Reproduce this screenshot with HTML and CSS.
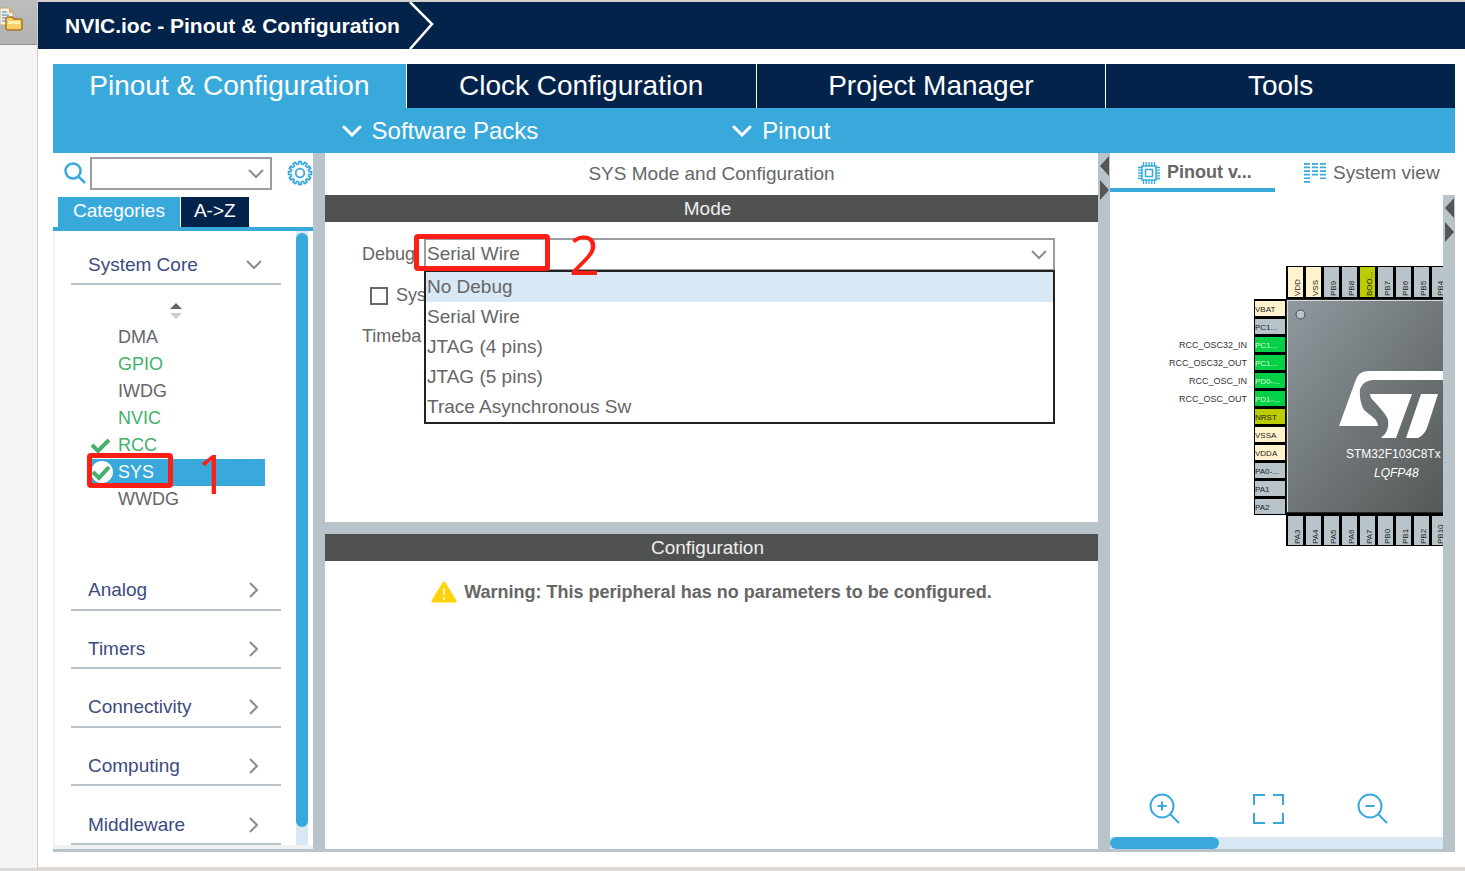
FILE: index.html
```html
<!DOCTYPE html>
<html lang="en">
<head>
  <meta charset="UTF-8" />
  <meta name="viewport" content="width=device-width, initial-scale=1.0"/>
  <title>NVIC.ioc - Pinout &amp; Configuration</title>
  <link rel="stylesheet" href="styles.css">
</head>
<body>

  <aside class="side-strip">
    <button class="restore-btn" aria-label="Open projects">
      <svg width="24" height="44" viewBox="0 0 24 44">
        <path d="M0 8h9l4 4v13H0z" fill="#f4f1e6" stroke="#c9ad72"/>
        <path d="M9 8v5h4z" fill="#d9b56a"/>
        <path d="M2 12h5M2 15h7M2 18h5M2 21h4" stroke="#7d9fd0" stroke-width="1.5"/>
        <path d="M6 19q0-2 2-2h4l2 2h6q2 0 2 2v7q0 2-2 2H8q-2 0-2-2z" fill="#f9cf63" stroke="#ad7427" stroke-width="1.5"/>
        <path d="M8 21h12v3H8z" fill="#fff0b0"/>
      </svg>
    </button>
  </aside>

  <main class="editor">
    <header class="title-bar">
      <h1>NVIC.ioc - Pinout &amp; Configuration</h1>
      <svg class="crumb-arrow" width="26" height="47" viewBox="0 0 26 47">
        <path d="M1 0L23 22L1 47" fill="none" stroke="#fff" stroke-width="2.5"/>
      </svg>
    </header>

    <div class="content">
      <nav class="main-tabs">
        <button class="main-tab active">Pinout &amp; Configuration</button>
        <button class="main-tab">Clock Configuration</button>
        <button class="main-tab">Project Manager</button>
        <button class="main-tab">Tools</button>
      </nav>
      <div class="sub-bar">
        <button class="sub-btn">
          <svg width="20" height="12" viewBox="0 0 20 12"><path d="M2 2l8 8 8-8" fill="none" stroke="#fff" stroke-width="3" stroke-linecap="round"/></svg>
          Software Packs
        </button>
        <button class="sub-btn">
          <svg width="20" height="12" viewBox="0 0 20 12"><path d="M2 2l8 8 8-8" fill="none" stroke="#fff" stroke-width="3" stroke-linecap="round"/></svg>
          Pinout
        </button>
      </div>

      <div class="workspace">
        <!-- Peripheral categories -->
        <section class="categories">
          <div class="search-row">
            <svg width="22" height="22" viewBox="0 0 22 22"><g fill="none" stroke="#39a9dc" stroke-width="2.5"><circle cx="9" cy="9" r="7.5"/><path d="M14.500 14.500L21 21"/></g></svg>
            <div class="select-box search-box">
              <select aria-label="Search peripheral"><option></option></select>
              <svg class="chevron" width="16" height="10" viewBox="0 0 16 10"><path d="M1 1l7 7 7-7" fill="none" stroke="#8c8c8c" stroke-width="2"/></svg>
            </div>
            <button class="gear-btn" aria-label="Settings">
              <svg width="26" height="26" viewBox="-13 -13 26 26">
                <defs><path id="tooth" d="M-2.300-8.700L-1.500-8.900L-1.300-11.400H1.300L1.500-8.900L2.300-8.700"/></defs>
                <g fill="none" stroke="#39a9dc" stroke-width="1.800">
                  <circle r="4.300"/>
                  <use href="#tooth"/>
                  <use href="#tooth" transform="rotate(30)"/>
                  <use href="#tooth" transform="rotate(60)"/>
                  <use href="#tooth" transform="rotate(90)"/>
                  <use href="#tooth" transform="rotate(120)"/>
                  <use href="#tooth" transform="rotate(150)"/>
                  <use href="#tooth" transform="rotate(180)"/>
                  <use href="#tooth" transform="rotate(210)"/>
                  <use href="#tooth" transform="rotate(240)"/>
                  <use href="#tooth" transform="rotate(270)"/>
                  <use href="#tooth" transform="rotate(300)"/>
                  <use href="#tooth" transform="rotate(330)"/>
                </g>
              </svg>
            </button>
          </div>
          <div class="list-tabs">
            <button class="list-tab active">Categories</button>
            <button class="list-tab">A-&gt;Z</button>
          </div>

          <div class="list-pane">
            <div class="list-body">
              <button class="category">System Core
                <svg width="16" height="10" viewBox="0 0 16 10"><path d="M1 1l7 7 7-7" fill="none" stroke="#8c8c8c" stroke-width="2"/></svg>
              </button>
              <button class="sort-btn" aria-label="Sort">
                <svg width="12" height="16" viewBox="0 0 12 16"><path d="M0 6l6-6 6 6z" fill="#666"/><path d="M0 10h12l-6 6z" fill="#ccc"/></svg>
              </button>
              <ul class="peripherals">
                <li>DMA</li>
                <li class="enabled">GPIO</li>
                <li>IWDG</li>
                <li class="enabled">NVIC</li>
                <li class="enabled">
                  <svg class="check" width="22" height="22" viewBox="0 0 22 22"><path d="M1 11l6 6L18 6" fill="none" stroke="#43b16c" stroke-width="4"/></svg>RCC
                </li>
                <li class="selected">
                  <svg class="check" width="22" height="22" viewBox="0 0 22 22"><circle cx="11" cy="11" r="11" fill="#fff"/><path d="M2 11l6 6L18 6" fill="none" stroke="#43b16c" stroke-width="4"/></svg>SYS
                  <span class="mark mark-sys"></span>
                  <span class="mark-num num-one">1</span>
                </li>
                <li>WWDG</li>
              </ul>
              <div class="closed-list">
                <button class="category">Analog
                  <svg width="10" height="16" viewBox="0 0 10 16"><path d="M1 1l7 7-7 7" fill="none" stroke="#8c8c8c" stroke-width="2"/></svg>
                </button>
                <button class="category">Timers
                  <svg width="10" height="16" viewBox="0 0 10 16"><path d="M1 1l7 7-7 7" fill="none" stroke="#8c8c8c" stroke-width="2"/></svg>
                </button>
                <button class="category">Connectivity
                  <svg width="10" height="16" viewBox="0 0 10 16"><path d="M1 1l7 7-7 7" fill="none" stroke="#8c8c8c" stroke-width="2"/></svg>
                </button>
                <button class="category">Computing
                  <svg width="10" height="16" viewBox="0 0 10 16"><path d="M1 1l7 7-7 7" fill="none" stroke="#8c8c8c" stroke-width="2"/></svg>
                </button>
                <button class="category">Middleware
                  <svg width="10" height="16" viewBox="0 0 10 16"><path d="M1 1l7 7-7 7" fill="none" stroke="#8c8c8c" stroke-width="2"/></svg>
                </button>
              </div>
            </div>
            <div class="v-scroll"><div class="v-thumb"></div></div>
          </div>
        </section>

        <div class="splitter"></div>

        <!-- Mode and configuration -->
        <section class="settings">
          <h2 class="settings-title">SYS Mode and Configuration</h2>
          <h3 class="bar">Mode</h3>
          <div class="mode-body">
            <div class="field">
              <label for="debug">Debug</label>
              <div class="select-box debug-box">
                <select id="debug"><option>Serial Wire</option></select>
                <svg class="chevron" width="16" height="10" viewBox="0 0 16 10"><path d="M1 1l7 7 7-7" fill="none" stroke="#8c8c8c" stroke-width="2"/></svg>
                <ul class="menu">
                  <li class="hover">No Debug</li>
                  <li>Serial Wire</li>
                  <li>JTAG (4 pins)</li>
                  <li>JTAG (5 pins)</li>
                  <li>Trace Asynchronous Sw</li>
                </ul>
                <span class="mark mark-debug"></span>
                <span class="mark-num num-two">2</span>
              </div>
            </div>
            <div class="field check-field">
              <input type="checkbox" id="wakeup">
              <label for="wakeup">Sys</label>
            </div>
            <div class="field">
              <span>Timeba</span>
            </div>
          </div>
          <div class="h-splitter"></div>
          <h3 class="bar">Configuration</h3>
          <p class="warning">
            <svg width="26" height="22" viewBox="0 0 26 22"><path d="M13 2L24 20H2z" fill="#ffd20a" stroke="#ffd20a" stroke-width="3" stroke-linejoin="round"/><path d="M13 7v7M13 16v3" stroke="#fff3b0" stroke-width="2"/></svg>
            Warning: This peripheral has no parameters to be configured.
          </p>
        </section>

        <div class="splitter arrows">
          <svg width="12" height="48" viewBox="0 0 12 48"><path d="M11 2v20L2 12zM2 26v20l9-10z" fill="#555"/></svg>
        </div>

        <!-- Chip view -->
        <section class="chip-view">
          <div class="view-tabs">
            <button class="view-tab active">
              <svg width="22" height="22" viewBox="0 0 22 22"><g fill="none" stroke="#39a9dc">
                <rect x="4" y="4" width="14" height="14" stroke-width="1.500"/><rect x="7.500" y="7.500" width="7" height="7" stroke-width="1.500"/>
                <path d="M5.500 0v4M8.200 0v4M11 0v4M13.800 0v4M16.500 0v4M5.500 18v4M8.200 18v4M11 18v4M13.800 18v4M16.500 18v4M0 5.500h4M0 8.200h4M0 11h4M0 13.800h4M0 16.500h4M18 5.500h4M18 8.200h4M18 11h4M18 13.800h4M18 16.500h4" stroke-width="1.300"/></g></svg>
              Pinout v...
            </button>
            <button class="view-tab">
              <svg width="22" height="22" viewBox="0 0 22 22"><g fill="none" stroke="#39a9dc" stroke-width="6" stroke-dasharray="1.700 1.900"><path d="M3 1v20M11 1v13M19 1v16"/></g></svg>
              System view
            </button>
          </div>
          <div class="chip-row">
            <div class="chip-pane">
              <div class="chip-canvas">
                <svg class="chip" width="345" height="360" viewBox="0 0 345 360">
                  <defs>
                    <linearGradient id="body" x1="0" y1="0" x2="1" y2="1">
                      <stop offset="0" stop-color="#90999f"/>
                      <stop offset="0.500" stop-color="#707678"/>
                      <stop offset="1" stop-color="#525655"/>
                    </linearGradient>
                  </defs>
                  <path d="M144 104h33v216h-33zM176 71h169v33H176zM176 318h169v33H176z" fill="#000"/>
                  <rect x="176" y="104" width="169" height="214" fill="#222"/>
                  <rect x="177" y="105" width="168" height="212" fill="#d5d9da"/>
                  <rect x="178" y="106" width="167" height="211" fill="url(#body)"/>
                  <circle cx="190.500" cy="119.500" r="4.500" fill="#b8c4ca" stroke="#444c50"/>

                  <!-- left pins -->
                  <g class="power"><rect x="145" y="106" width="30" height="15"/><rect x="145" y="232" width="30" height="15"/><rect x="145" y="250" width="30" height="15"/></g>
                  <g class="free"><rect x="145" y="124" width="30" height="15"/><rect x="145" y="268" width="30" height="15"/><rect x="145" y="286" width="30" height="15"/><rect x="145" y="304" width="30" height="15"/></g>
                  <g class="used"><rect x="145" y="142" width="30" height="15"/><rect x="145" y="160" width="30" height="15"/><rect x="145" y="178" width="30" height="15"/><rect x="145" y="196" width="30" height="15"/></g>
                  <g class="reset"><rect x="145" y="214" width="30" height="15"/></g>
                  <g class="pin-text">
                    <text x="145" y="117">VBAT</text>
                    <text x="145" y="135">PC1...</text>
                    <text x="145" y="153" class="light">PC1...</text>
                    <text x="145" y="171" class="light">PC1...</text>
                    <text x="145" y="189" class="light">PD0-...</text>
                    <text x="145" y="207" class="light">PD1-...</text>
                    <text x="145" y="225">NRST</text>
                    <text x="145" y="243">VSSA</text>
                    <text x="145" y="261">VDDA</text>
                    <text x="145" y="279">PA0-...</text>
                    <text x="145" y="297">PA1</text>
                    <text x="145" y="315">PA2</text>
                  </g>
                  <g class="signal-text">
                    <text x="137" y="153">RCC_OSC32_IN</text>
                    <text x="137" y="171">RCC_OSC32_OUT</text>
                    <text x="137" y="189">RCC_OSC_IN</text>
                    <text x="137" y="207">RCC_OSC_OUT</text>
                  </g>

                  <!-- top pins -->
                  <g class="power"><rect x="178" y="72" width="15" height="30"/><rect x="196" y="72" width="15" height="30"/></g>
                  <g class="free"><rect x="214" y="72" width="15" height="30"/><rect x="232" y="72" width="15" height="30"/><rect x="268" y="72" width="15" height="30"/><rect x="286" y="72" width="15" height="30"/><rect x="304" y="72" width="15" height="30"/><rect x="322" y="72" width="15" height="30"/></g>
                  <g class="reset"><rect x="250" y="72" width="15" height="30"/></g>
                  <g class="pin-text">
                    <text transform="translate(190 101) rotate(-90)">VDD</text>
                    <text transform="translate(208 101) rotate(-90)">VSS</text>
                    <text transform="translate(226 101) rotate(-90)">PB9</text>
                    <text transform="translate(244 101) rotate(-90)">PB8</text>
                    <text transform="translate(262 101) rotate(-90)">BOO...</text>
                    <text transform="translate(280 101) rotate(-90)">PB7</text>
                    <text transform="translate(298 101) rotate(-90)">PB6</text>
                    <text transform="translate(316 101) rotate(-90)">PB5</text>
                    <text transform="translate(333 101) rotate(-90)">PB4</text>
                  </g>

                  <!-- bottom pins -->
                  <g class="free"><rect x="178" y="321" width="15" height="29"/><rect x="196" y="321" width="15" height="29"/><rect x="214" y="321" width="15" height="29"/><rect x="232" y="321" width="15" height="29"/><rect x="250" y="321" width="15" height="29"/><rect x="268" y="321" width="15" height="29"/><rect x="286" y="321" width="15" height="29"/><rect x="304" y="321" width="15" height="29"/><rect x="322" y="321" width="15" height="29"/></g>
                  <g class="pin-text">
                    <text transform="translate(190 349) rotate(-90)">PA3</text>
                    <text transform="translate(208 349) rotate(-90)">PA4</text>
                    <text transform="translate(226 349) rotate(-90)">PA5</text>
                    <text transform="translate(244 349) rotate(-90)">PA6</text>
                    <text transform="translate(262 349) rotate(-90)">PA7</text>
                    <text transform="translate(280 349) rotate(-90)">PB0</text>
                    <text transform="translate(298 349) rotate(-90)">PB1</text>
                    <text transform="translate(316 349) rotate(-90)">PB2</text>
                    <text transform="translate(333 349) rotate(-90)">PB10</text>
                  </g>

                  <!-- vendor logo -->
                  <g fill="#fff">
                    <path d="M229 231L245 187Q248 176 258 176H345V185H262Q253 186 250 194Q249 206 254 215L265 224Q268 228 268 231Z"/>
                    <path d="M260 199H302L286 243H271Q280 236 278 225Q277 221 270 213L261 203Z"/>
                    <path d="M311 199H328L318 230Q315 240 308 243H296Z"/>
                  </g>
                  <text class="part" x="236" y="263">STM32F103C8Tx</text>
                  <text class="part package" x="264" y="282">LQFP48</text>
                </svg>
              </div>
              <div class="zoom-bar">
                <button aria-label="Zoom in"><svg width="32" height="32" viewBox="0 0 32 32"><g fill="none" stroke="#39a9dc" stroke-width="2"><circle cx="14" cy="14" r="11.500"/><path d="M22 22l9 9M9.500 14h9M14 9.500v9"/></g></svg></button>
                <button aria-label="Fit to screen"><svg width="32" height="32" viewBox="0 0 32 32"><path d="M2 13V3h11M21 3h10v10M31 21v10H21M13 31H2V21" fill="none" stroke="#39a9dc" stroke-width="2"/></svg></button>
                <button aria-label="Zoom out"><svg width="32" height="32" viewBox="0 0 32 32"><g fill="none" stroke="#39a9dc" stroke-width="2"><circle cx="14" cy="14" r="11.500"/><path d="M22 22l9 9M9.500 14h9"/></g></svg></button>
              </div>
              <div class="h-scroll"><div class="h-thumb"></div></div>
            </div>
            <div class="splitter arrows">
              <svg width="12" height="48" viewBox="0 0 12 48"><path d="M11 2v20L2 12zM2 26v20l9-10z" fill="#555"/></svg>
            </div>
          </div>
        </section>
      </div>
    </div>
  </main>

</body>
</html>
```

FILE: styles.css
```css
* {
  box-sizing: border-box;
}
body {
  margin: 0;
  display: flex;
  height: 100vh;
  overflow: hidden;
  font-family: "Liberation Sans", Arial, sans-serif;
  font-size: 18px;
  color: #666;
  background: #f5f4f2;
}
h1, h2, h3, p, ul {
  margin: 0;
  padding: 0;
  font-weight: normal;
}
ul {
  list-style: none;
}
button {
  border: none;
  padding: 0;
  background: none;
  font: inherit;
  color: inherit;
  cursor: pointer;
}
svg {
  display: block;
  flex: none;
}

/* left strip */
.side-strip {
  flex: none;
  width: 38px;
  border-right: 1px solid #d3cdca;
  border-bottom: 3px solid #dcdad8;
}
.restore-btn {
  display: block;
  width: 100%;
  height: 45px;
  background: linear-gradient(#bdbdbd, #b2b2b2);
  border-bottom: 1px solid #8e8e8e;
}

/* editor */
.editor {
  flex: 1;
  min-width: 0;
  display: flex;
  flex-direction: column;
  background: #fff;
  border-top: 2px solid #d3cfcc;
  border-bottom: 4px solid #dcd9d7;
}
.title-bar {
  flex: none;
  display: flex;
  align-items: center;
  gap: 9px;
  height: 47px;
  padding-left: 27px;
  background: #03234b;
  color: #fff;
}
.title-bar h1 {
  font-size: 21px;
  font-weight: bold;
}
.content {
  flex: 1;
  min-height: 0;
  display: flex;
  flex-direction: column;
  padding: 15px 10px 15px 15px;
}
.main-tabs {
  flex: none;
  display: flex;
  gap: 1px;
  height: 44px;
}
.main-tab {
  flex: 1;
  background: #03234b;
  color: #fff;
  font-size: 28px;
}
.main-tab.active {
  flex: 1 0 4px;
  background: #39a9dc;
}
.sub-bar {
  flex: none;
  display: flex;
  justify-content: center;
  gap: 194px;
  height: 45px;
  padding-right: 336px;
  background: #39a9dc;
  color: #fff;
  font-size: 24px;
}
.sub-btn {
  display: flex;
  align-items: center;
  gap: 10px;
}
.workspace {
  flex: 1;
  min-height: 0;
  display: flex;
  border-bottom: 3px solid #b8c4ca;
}
.splitter {
  flex: none;
  width: 12px;
  background: #b8c4ca;
}

/* categories */
.categories {
  flex: none;
  width: 260px;
  display: flex;
  flex-direction: column;
  border-bottom: 4px solid #f0f1f2;
}
.search-row {
  flex: none;
  display: flex;
  align-items: center;
  height: 40px;
  padding-left: 11px;
  gap: 4px;
}
.select-box {
  position: relative;
  height: 33px;
}
.select-box select {
  appearance: none;
  width: 100%;
  height: 100%;
  padding: 0 4px 2px 1px;
  border: 2px solid #9a9ea2;
  border-radius: 0;
  background: #fff;
  font: inherit;
  color: inherit;
}
.chevron {
  position: absolute;
  right: 8px;
  top: 12px;
  pointer-events: none;
}
.search-box {
  width: 182px;
}
.gear-btn {
  margin-left: 11px;
}
.list-tabs {
  flex: none;
  display: flex;
  gap: 1px;
  height: 38px;
  padding: 4px 0 0 5px;
  border-bottom: 4px solid #39a9dc;
}
.list-tab {
  padding: 0 15px 3px;
  background: #03234b;
  color: #fff;
  font-size: 19px;
}
.list-tab:last-child {
  padding: 0 13px 3px;
}
.list-tab.active {
  background: #39a9dc;
}
.list-pane {
  flex: 1;
  min-height: 0;
  display: flex;
  gap: 15px;
  padding-right: 5px;
  border-left: 2px solid #f0f1f2;
}
.list-body {
  flex: 1;
  min-width: 0;
  display: flex;
  flex-direction: column;
  padding-left: 16px;
}
.category {
  flex: none;
  display: flex;
  align-items: center;
  justify-content: space-between;
  height: 54px;
  padding: 16px 19px 0 17px;
  border-bottom: 2px solid #b8c4ca;
  color: #3c4b80;
  font-size: 19px;
}
.sort-btn {
  align-self: center;
  padding: 18px 0 5px;
}
.peripherals {
  flex: none;
}
.peripherals li {
  position: relative;
  height: 27px;
  margin: 0 16px 0 20px;
  padding-left: 27px;
  line-height: 27px;
}
.peripherals .enabled {
  color: #43b16c;
}
.peripherals .selected {
  background: #39a9dc;
  color: #fff;
}
.check {
  position: absolute;
  left: 0;
  top: 2px;
}
.closed-list {
  flex: 1;
  display: flex;
  flex-direction: column;
  padding-top: 39px;
}
.closed-list .category {
  flex: 1;
  padding: 20px 22px 0 17px;
}
.v-scroll {
  width: 12px;
  padding-top: 2px;
  background: #d9e8f5;
}
.v-thumb {
  height: 97%;
  border-radius: 6px;
  background: #39a9dc;
}

/* settings */
.settings {
  flex: 1;
  min-width: 0;
  display: flex;
  flex-direction: column;
}
.settings-title {
  flex: none;
  height: 42px;
  line-height: 42px;
  font-size: 19px;
  text-align: center;
}
.bar {
  flex: none;
  height: 27px;
  line-height: 27px;
  padding-right: 8px;
  background: #505251;
  color: #eee;
  font-size: 19px;
  text-align: center;
}
.mode-body {
  flex: none;
  display: flex;
  flex-direction: column;
  gap: 8px;
  height: 300px;
  padding: 16px 43px 0 37px;
}
.field {
  display: flex;
  align-items: center;
  gap: 8px;
  height: 33px;
}
.field label[for="debug"] {
  width: 54px;
}
.check-field {
  padding-left: 8px;
}
.check-field input {
  appearance: none;
  width: 18px;
  height: 18px;
  margin: 0;
  border: 2px solid #666;
  background: #fff;
}
.debug-box {
  flex: 1;
  font-size: 19px;
}
.menu {
  position: absolute;
  left: 0;
  right: 0;
  top: 32px;
  z-index: 2;
  border: 2px solid #222;
  background: #fff;
}
.menu li {
  height: 30px;
  line-height: 30px;
  padding-left: 1px;
}
.menu .hover {
  background: #d9e8f5;
}
.h-splitter {
  flex: none;
  height: 12px;
  background: #b8c4ca;
}
.warning {
  display: flex;
  justify-content: center;
  align-items: center;
  gap: 7px;
  height: 62px;
  font-weight: bold;
}

/* red step marks */
.mark {
  position: absolute;
  z-index: 3;
  border: 5px solid #ff1e14;
  border-radius: 4px;
}
.mark-sys {
  left: -4px;
  top: -6px;
  width: 86px;
  height: 35px;
}
.mark-debug {
  left: -10px;
  top: -4px;
  width: 136px;
  height: 37px;
}
.mark-num {
  position: absolute;
  z-index: 3;
  color: #ff1e14;
  font-family: "Open Sans", sans-serif;
  font-size: 54px;
  line-height: 54px;
}
.num-one {
  left: 106px;
  top: -13px;
}
.num-two {
  left: 145px;
  top: -11px;
}

/* chip view */
.arrows {
  padding-top: 1px;
}
.chip-view {
  flex: none;
  width: 345px;
  display: flex;
  flex-direction: column;
}
.view-tabs {
  flex: none;
  display: flex;
  gap: 14px;
  height: 42px;
  padding-bottom: 3px;
}
.view-tab {
  display: flex;
  align-items: center;
  gap: 7px;
  width: 165px;
  padding: 4px 0 0 28px;
  border-bottom: 4px solid transparent;
  white-space: nowrap;
  font-size: 19px;
}
.view-tab + .view-tab {
  padding-left: 15px;
}
.view-tab.active {
  border-color: #39a9dc;
  font-size: 18px;
  font-weight: bold;
}
.chip-row {
  flex: 1;
  min-height: 0;
  display: flex;
}
.chip-pane {
  flex: 1;
  min-width: 0;
  display: flex;
  flex-direction: column;
}
.chip-canvas {
  flex: 1;
  min-height: 0;
  overflow: hidden;
}
.power {
  fill: #fff3cd;
}
.free {
  fill: #b8c4ca;
}
.used {
  fill: #02d046;
}
.reset {
  fill: #bbcc00;
}
.pin-text {
  font-size: 8px;
  fill: #222;
}
.pin-text .light {
  fill: #d9ffd9;
}
.signal-text {
  font-size: 9px;
  fill: #333;
  text-anchor: end;
}
.part {
  font-size: 12px;
  fill: #fff;
}
.package {
  font-style: italic;
}
.zoom-bar {
  flex: none;
  display: flex;
  gap: 72px;
  padding: 0 0 13px 38px;
}
.h-scroll {
  flex: none;
  height: 12px;
  background: #d9e8f5;
}
.h-thumb {
  width: 109px;
  height: 100%;
  border-radius: 6px;
  background: #39a9dc;
}
```
